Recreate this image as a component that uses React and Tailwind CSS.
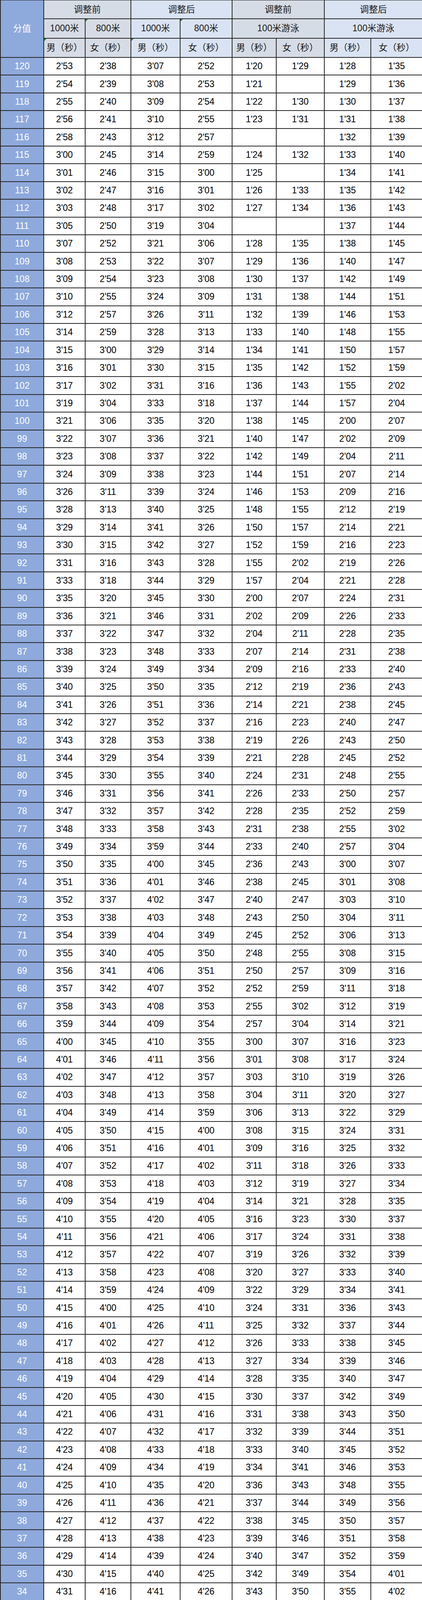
import React from 'react';

// 分值 男(1000米调整前) 女(800米调整前) 男(调整后) 女(调整后) 游泳前男 游泳前女 游泳后男 游泳后女
const raw = `120 2'53 2'38 3'07 2'52 1'20 1'29 1'28 1'35
119 2'54 2'39 3'08 2'53 1'21 - 1'29 1'36
118 2'55 2'40 3'09 2'54 1'22 1'30 1'30 1'37
117 2'56 2'41 3'10 2'55 1'23 1'31 1'31 1'38
116 2'58 2'43 3'12 2'57 - - 1'32 1'39
115 3'00 2'45 3'14 2'59 1'24 1'32 1'33 1'40
114 3'01 2'46 3'15 3'00 1'25 - 1'34 1'41
113 3'02 2'47 3'16 3'01 1'26 1'33 1'35 1'42
112 3'03 2'48 3'17 3'02 1'27 1'34 1'36 1'43
111 3'05 2'50 3'19 3'04 - - 1'37 1'44
110 3'07 2'52 3'21 3'06 1'28 1'35 1'38 1'45
109 3'08 2'53 3'22 3'07 1'29 1'36 1'40 1'47
108 3'09 2'54 3'23 3'08 1'30 1'37 1'42 1'49
107 3'10 2'55 3'24 3'09 1'31 1'38 1'44 1'51
106 3'12 2'57 3'26 3'11 1'32 1'39 1'46 1'53
105 3'14 2'59 3'28 3'13 1'33 1'40 1'48 1'55
104 3'15 3'00 3'29 3'14 1'34 1'41 1'50 1'57
103 3'16 3'01 3'30 3'15 1'35 1'42 1'52 1'59
102 3'17 3'02 3'31 3'16 1'36 1'43 1'55 2'02
101 3'19 3'04 3'33 3'18 1'37 1'44 1'57 2'04
100 3'21 3'06 3'35 3'20 1'38 1'45 2'00 2'07
99 3'22 3'07 3'36 3'21 1'40 1'47 2'02 2'09
98 3'23 3'08 3'37 3'22 1'42 1'49 2'04 2'11
97 3'24 3'09 3'38 3'23 1'44 1'51 2'07 2'14
96 3'26 3'11 3'39 3'24 1'46 1'53 2'09 2'16
95 3'28 3'13 3'40 3'25 1'48 1'55 2'12 2'19
94 3'29 3'14 3'41 3'26 1'50 1'57 2'14 2'21
93 3'30 3'15 3'42 3'27 1'52 1'59 2'16 2'23
92 3'31 3'16 3'43 3'28 1'55 2'02 2'19 2'26
91 3'33 3'18 3'44 3'29 1'57 2'04 2'21 2'28
90 3'35 3'20 3'45 3'30 2'00 2'07 2'24 2'31
89 3'36 3'21 3'46 3'31 2'02 2'09 2'26 2'33
88 3'37 3'22 3'47 3'32 2'04 2'11 2'28 2'35
87 3'38 3'23 3'48 3'33 2'07 2'14 2'31 2'38
86 3'39 3'24 3'49 3'34 2'09 2'16 2'33 2'40
85 3'40 3'25 3'50 3'35 2'12 2'19 2'36 2'43
84 3'41 3'26 3'51 3'36 2'14 2'21 2'38 2'45
83 3'42 3'27 3'52 3'37 2'16 2'23 2'40 2'47
82 3'43 3'28 3'53 3'38 2'19 2'26 2'43 2'50
81 3'44 3'29 3'54 3'39 2'21 2'28 2'45 2'52
80 3'45 3'30 3'55 3'40 2'24 2'31 2'48 2'55
79 3'46 3'31 3'56 3'41 2'26 2'33 2'50 2'57
78 3'47 3'32 3'57 3'42 2'28 2'35 2'52 2'59
77 3'48 3'33 3'58 3'43 2'31 2'38 2'55 3'02
76 3'49 3'34 3'59 3'44 2'33 2'40 2'57 3'04
75 3'50 3'35 4'00 3'45 2'36 2'43 3'00 3'07
74 3'51 3'36 4'01 3'46 2'38 2'45 3'01 3'08
73 3'52 3'37 4'02 3'47 2'40 2'47 3'03 3'10
72 3'53 3'38 4'03 3'48 2'43 2'50 3'04 3'11
71 3'54 3'39 4'04 3'49 2'45 2'52 3'06 3'13
70 3'55 3'40 4'05 3'50 2'48 2'55 3'08 3'15
69 3'56 3'41 4'06 3'51 2'50 2'57 3'09 3'16
68 3'57 3'42 4'07 3'52 2'52 2'59 3'11 3'18
67 3'58 3'43 4'08 3'53 2'55 3'02 3'12 3'19
66 3'59 3'44 4'09 3'54 2'57 3'04 3'14 3'21
65 4'00 3'45 4'10 3'55 3'00 3'07 3'16 3'23
64 4'01 3'46 4'11 3'56 3'01 3'08 3'17 3'24
63 4'02 3'47 4'12 3'57 3'03 3'10 3'19 3'26
62 4'03 3'48 4'13 3'58 3'04 3'11 3'20 3'27
61 4'04 3'49 4'14 3'59 3'06 3'13 3'22 3'29
60 4'05 3'50 4'15 4'00 3'08 3'15 3'24 3'31
59 4'06 3'51 4'16 4'01 3'09 3'16 3'25 3'32
58 4'07 3'52 4'17 4'02 3'11 3'18 3'26 3'33
57 4'08 3'53 4'18 4'03 3'12 3'19 3'27 3'34
56 4'09 3'54 4'19 4'04 3'14 3'21 3'28 3'35
55 4'10 3'55 4'20 4'05 3'16 3'23 3'30 3'37
54 4'11 3'56 4'21 4'06 3'17 3'24 3'31 3'38
53 4'12 3'57 4'22 4'07 3'19 3'26 3'32 3'39
52 4'13 3'58 4'23 4'08 3'20 3'27 3'33 3'40
51 4'14 3'59 4'24 4'09 3'22 3'29 3'34 3'41
50 4'15 4'00 4'25 4'10 3'24 3'31 3'36 3'43
49 4'16 4'01 4'26 4'11 3'25 3'32 3'37 3'44
48 4'17 4'02 4'27 4'12 3'26 3'33 3'38 3'45
47 4'18 4'03 4'28 4'13 3'27 3'34 3'39 3'46
46 4'19 4'04 4'29 4'14 3'28 3'35 3'40 3'47
45 4'20 4'05 4'30 4'15 3'30 3'37 3'42 3'49
44 4'21 4'06 4'31 4'16 3'31 3'38 3'43 3'50
43 4'22 4'07 4'32 4'17 3'32 3'39 3'44 3'51
42 4'23 4'08 4'33 4'18 3'33 3'40 3'45 3'52
41 4'24 4'09 4'34 4'19 3'34 3'41 3'46 3'53
40 4'25 4'10 4'35 4'20 3'36 3'43 3'48 3'55
39 4'26 4'11 4'36 4'21 3'37 3'44 3'49 3'56
38 4'27 4'12 4'37 4'22 3'38 3'45 3'50 3'57
37 4'28 4'13 4'38 4'23 3'39 3'46 3'51 3'58
36 4'29 4'14 4'39 4'24 3'40 3'47 3'52 3'59
35 4'30 4'15 4'40 4'25 3'42 3'49 3'54 4'01
34 4'31 4'16 4'41 4'26 3'43 3'50 3'55 4'02
33 4'32 4'17 4'42 4'27 3'44 3'51 3'56 4'03
32 4'33 4'18 4'43 4'28 3'45 3'52 3'57 4'04
31 4'34 4'19 4'44 4'29 3'46 3'53 3'58 4'05
30 4'35 4'20 4'45 4'30 3'48 3'55 4'00 4'07
29 4'36 4'21 4'46 4'31 3'49 3'56 4'01 4'08
28 4'37 4'22 4'47 4'32 3'50 3'57 4'02 4'09
27 4'38 4'23 4'48 4'33 3'51 3'58 4'03 4'10
26 4'39 4'24 4'49 4'34 3'52 3'59 4'04 4'11
25 4'40 4'25 4'50 4'35 3'54 4'01 4'05 4'12
24 4'41 4'26 4'51 4'36 3'55 4'02 4'06 4'13
23 4'42 4'27 4'52 4'37 3'56 4'03 4'07 4'14
22 4'43 4'28 4'53 4'38 3'57 4'04 4'08 4'15
21 4'44 4'29 4'54 4'39 3'58 4'05 4'09 4'16
20 4'45 4'30 4'55 4'40 4'00 4'07 4'10 4'17
19 4'46 4'31 4'56 4'41 4'01 4'08 4'11 4'18
18 4'47 4'32 4'57 4'42 4'02 4'09 4'12 4'19
17 4'48 4'33 4'58 4'43 4'03 4'10 4'13 4'20
16 4'49 4'34 4'59 4'44 4'04 4'11 4'14 4'21
15 4'50 4'35 5'00 4'45 4'05 4'12 4'15 4'22
14 4'51 4'36 5'01 4'46 4'06 4'13 4'16 4'23
13 4'52 4'37 5'02 4'47 4'07 4'14 4'17 4'24
12 4'53 4'38 5'03 4'48 4'08 4'15 4'18 4'25
11 4'54 4'39 5'04 4'49 4'09 4'16 4'19 4'26
10 4'55 4'40 5'05 4'50 4'10 4'17 4'20 4'27
9 4'56 4'41 5'06 4'51 4'11 4'18 4'21 4'28
8 4'57 4'42 5'07 4'52 4'12 4'19 4'22 4'29
7 4'58 4'43 5'08 4'53 4'13 4'20 4'23 4'30
6 4'59 4'44 5'09 4'54 4'14 4'21 4'24 4'31
5 5'00 4'45 5'10 4'55 4'15 4'22 4'25 4'32
4 5'01 4'46 5'11 4'56 4'16 4'23 4'26 4'33
3 5'02 4'47 5'12 4'57 4'17 4'24 4'27 4'34
2 5'03 4'48 5'13 4'58 4'18 4'25 4'28 4'35
1 5'04 4'49 5'14 4'59 4'19 4'26 4'29 4'36
0 5'05 4'50 5'15 4'60 4'20 4'27 4'30 4'37`;

const rows = raw.split('\n').map(line => line.trim().split(' ').map(v => (v === '-' ? '' : v)));

const Flag = () => (
    <span className="absolute top-0 left-0 w-0 h-0 border-t-[6px] border-r-[6px] border-t-[#2a7a3b] border-r-transparent" />
);

const Head = ({ className = '', bg, flag, children }) => (
    <div className={`relative flex items-center justify-center text-[#1a1a1a] ${bg} ${className}`}>
        {flag && <Flag />}
        {children}
    </div>
);

export default function App() {
    const before = 'bg-[#d6dce5]';
    const after = 'bg-[#dae3f3]';

    return (
        <div
            className="w-[1080px] h-[5642px] overflow-hidden bg-white"
            style={{ fontFamily: '"Liberation Sans", "Noto Sans CJK SC", sans-serif' }}
        >
            <div className="grid grid-cols-[109px_104px_115px_124px_131px_111px_121px_117px_130px] grid-rows-[46.33px_47.33px_47.33px] auto-rows-[43.42px] gap-[2px] border-l-2 border-t border-[#262626] bg-[#262626] text-[23px] leading-none">
                {/* header */}
                <div className="row-span-3 flex items-center justify-center bg-[#8ea9db] text-white">分值</div>
                <Head className="col-span-2" bg={before}>调整前</Head>
                <Head className="col-span-2" bg={after}>调整后</Head>
                <Head className="col-span-2" bg={before}>调整前</Head>
                <Head className="col-span-2" bg={after}>调整后</Head>

                <Head bg={before}>1000米</Head>
                <Head bg={before} flag>800米</Head>
                <Head bg={after}>1000米</Head>
                <Head bg={after} flag>800米</Head>
                <Head className="col-span-2" bg={before}>100米游泳</Head>
                <Head className="col-span-2" bg={after}>100米游泳</Head>

                <Head bg={before} flag>男（秒）</Head>
                <Head bg={before}>女（秒）</Head>
                <Head bg={after} flag>男（秒）</Head>
                <Head bg={after}>女（秒）</Head>
                <Head bg={before}>男（秒）</Head>
                <Head bg={before}>女（秒）</Head>
                <Head bg={after}>男（秒）</Head>
                <Head bg={after}>女（秒）</Head>

                {/* data */}
                {rows.map(row => (
                    <React.Fragment key={row[0]}>
                        <div className="flex items-center justify-center bg-[#8ea9db] text-white">{row[0]}</div>
                        {row.slice(1).map((v, i) => (
                            <div key={i} className="flex items-center justify-center bg-white text-black">
                                {v}
                            </div>
                        ))}
                    </React.Fragment>
                ))}
            </div>
        </div>
    );
}
